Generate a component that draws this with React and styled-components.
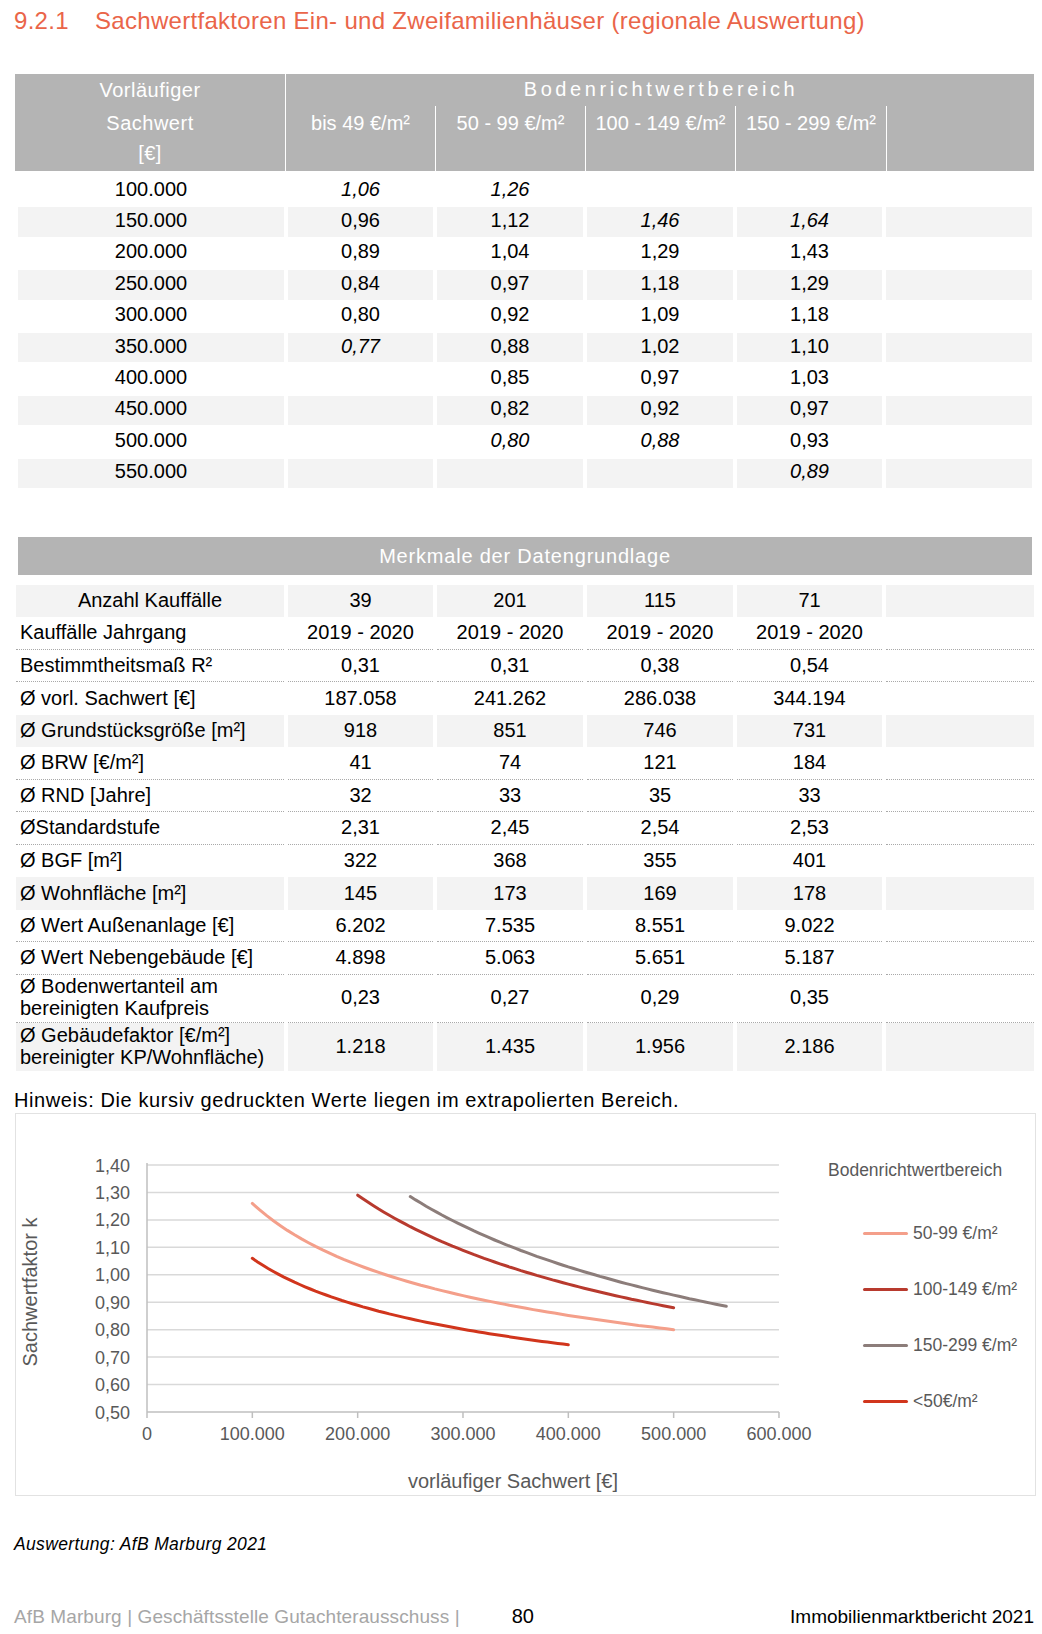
import React from "react";
import styled, { createGlobalStyle } from "styled-components";

const GlobalStyle = createGlobalStyle`
  html, body {
    margin: 0;
    padding: 0;
    background: #fff;
  }
  body {
    font-family: "Liberation Sans", Arial, sans-serif;
    color: #000;
  }
`;

const Page = styled.div`
  width: 1042px;
  box-sizing: border-box;
  padding: 0 8px 0 14px;
`;

const Title = styled.h1`
  margin: 0;
  padding-top: 6px;
  font-size: 24px;
  line-height: 30px;
  font-weight: normal;
  letter-spacing: 0.3px;
  color: #ea6549;
  white-space: nowrap;
`;

const TitleNum = styled.span`
  display: inline-block;
  width: 81px;
`;

/* ---------- Tabelle 1 ---------- */

const HeadGrid = styled.div`
  margin: 38px 0 0 1px;
  display: grid;
  grid-template-columns: 270px 150px 150px 150px 151px 150px;
  grid-template-rows: 32px 65px;
  background: #b4b4b4;
  color: #fff;
  font-size: 20px;
`;

const CornerCell = styled.div`
  grid-row: 1 / 3;
  display: grid;
  grid-template-rows: 32px 33px 28px;
  text-align: center;
  letter-spacing: 0.5px;
`;

const CornerLine = styled.span`
  line-height: ${({ $h }) => $h}px;
  padding-top: ${({ $pad }) => ($pad ? "2px" : "0")};
`;

const GroupCell = styled.div`
  grid-column: 2 / 7;
  border-left: 1px solid #fff;
  text-align: center;
  line-height: 30px;
  letter-spacing: 3.6px;
`;

const SubHead = styled.div`
  border-left: 1px solid #fff;
  padding-top: 2px;
  text-align: center;
  line-height: 31px;
  white-space: nowrap;
`;

const FactorGrid = styled.div`
  margin: 5px 0 0 4px;
  display: grid;
  grid-template-columns: 266px 145px 146px 146px 145px 146px;
  grid-auto-rows: 29.4px;
  column-gap: 4px;
  row-gap: 2px;
  font-size: 20px;
`;

const FactorCell = styled.div`
  display: flex;
  align-items: center;
  justify-content: center;
  padding-bottom: 3px;
  box-sizing: border-box;
  background: ${({ $striped }) => ($striped ? "#f3f3f3" : "transparent")};
  font-style: ${({ $italic }) => ($italic ? "italic" : "normal")};
`;

/* ---------- Tabelle 2 ---------- */

const Band = styled.div`
  margin: 49px 0 0 4px;
  width: 1014px;
  height: 38px;
  line-height: 38px;
  background: #b4b4b4;
  color: #fff;
  font-size: 20px;
  letter-spacing: 0.8px;
  text-align: center;
`;

const DataGrid = styled.div`
  margin: 10px 0 0 2px;
  display: grid;
  grid-template-columns: 268px 145px 146px 146px 145px 148px;
  column-gap: 4px;
  font-size: 20px;
`;

const DataCell = styled.div`
  height: ${({ $tall }) => ($tall ? "48px" : "32.5px")};
  box-sizing: border-box;
  display: flex;
  align-items: center;
  justify-content: ${({ $label, $center }) => ($label && !$center ? "flex-start" : "center")};
  padding: 0 0 2px ${({ $label, $center }) => ($label && !$center ? "4px" : "0")};
  background: ${({ $striped }) => ($striped ? "#f3f3f3" : "transparent")};
  border-bottom: ${({ $dotted }) => ($dotted ? "1px dotted #a9a9a9" : "none")};
  line-height: ${({ $tall }) => ($tall ? "22px" : "24px")};
  white-space: nowrap;
`;

const Note = styled.p`
  margin: 17px 0 0;
  font-size: 20px;
  line-height: 24px;
  letter-spacing: 0.6px;
`;

/* ---------- Diagramm ---------- */

const ChartBox = styled.div`
  margin: 1px 0 0 1px;
  width: 1021px;
  height: 383px;
  box-sizing: border-box;
  border: 1px solid #e2e2e2;
  display: flex;
`;

const Plot = styled.svg`
  flex: none;
  display: block;
  font-family: "Liberation Sans", Arial, sans-serif;
`;

const Legend = styled.div`
  flex: 1;
  padding: 45px 0 0 12px;
  color: #595959;
  font-size: 17.5px;
`;

const LegendTitle = styled.div`
  line-height: 22px;
  margin-bottom: 42px;
  white-space: nowrap;
`;

const LegendItem = styled.div`
  display: flex;
  align-items: center;
  height: 22px;
  margin: 0 0 34px 35px;
  white-space: nowrap;
`;

const LegendLine = styled.span`
  display: inline-block;
  width: 45px;
  height: 3px;
  border-radius: 2px;
  margin-right: 5px;
  background: ${({ $color }) => $color};
`;

/* ---------- Fuß ---------- */

const Source = styled.div`
  margin-top: 37px;
  font-size: 17.5px;
  line-height: 22px;
  font-style: italic;
  letter-spacing: 0.35px;
`;

const Footer = styled.div`
  margin-top: 49px;
  display: flex;
  align-items: baseline;
  font-size: 19px;
  line-height: 24px;
`;

const FooterLeft = styled.span`
  color: #a6a6a6;
  letter-spacing: 0.1px;
`;

const PageNo = styled.span`
  margin-left: 52px;
  font-size: 20px;
`;

const FooterRight = styled.span`
  margin-left: auto;
`;

const factorRows = [
  ["100.000", "1,06*", "1,26*", "", ""],
  ["150.000", "0,96", "1,12", "1,46*", "1,64*"],
  ["200.000", "0,89", "1,04", "1,29", "1,43"],
  ["250.000", "0,84", "0,97", "1,18", "1,29"],
  ["300.000", "0,80", "0,92", "1,09", "1,18"],
  ["350.000", "0,77*", "0,88", "1,02", "1,10"],
  ["400.000", "", "0,85", "0,97", "1,03"],
  ["450.000", "", "0,82", "0,92", "0,97"],
  ["500.000", "", "0,80*", "0,88*", "0,93"],
  ["550.000", "", "", "", "0,89*"],
];

// kind: s = grau hinterlegt, d = gepunktete Linie, n = nichts
const dataRows = [
  { label: ["Anzahl Kauffälle"], kind: "s", center: true, values: ["39", "201", "115", "71"] },
  { label: ["Kauffälle Jahrgang"], kind: "d", values: ["2019 - 2020", "2019 - 2020", "2019 - 2020", "2019 - 2020"] },
  { label: ["Bestimmtheitsmaß R²"], kind: "d", values: ["0,31", "0,31", "0,38", "0,54"] },
  { label: ["Ø vorl. Sachwert [€]"], kind: "n", values: ["187.058", "241.262", "286.038", "344.194"] },
  { label: ["Ø Grundstücksgröße [m²]"], kind: "s", values: ["918", "851", "746", "731"] },
  { label: ["Ø BRW [€/m²]"], kind: "d", values: ["41", "74", "121", "184"] },
  { label: ["Ø RND [Jahre]"], kind: "d", values: ["32", "33", "35", "33"] },
  { label: ["ØStandardstufe"], kind: "d", values: ["2,31", "2,45", "2,54", "2,53"] },
  { label: ["Ø BGF [m²]"], kind: "n", values: ["322", "368", "355", "401"] },
  { label: ["Ø Wohnfläche [m²]"], kind: "s", values: ["145", "173", "169", "178"] },
  { label: ["Ø Wert Außenanlage [€]"], kind: "d", values: ["6.202", "7.535", "8.551", "9.022"] },
  { label: ["Ø Wert Nebengebäude [€]"], kind: "d", values: ["4.898", "5.063", "5.651", "5.187"] },
  { label: ["Ø Bodenwertanteil am", "bereinigten Kaufpreis"], kind: "d", values: ["0,23", "0,27", "0,29", "0,35"] },
  { label: ["Ø Gebäudefaktor [€/m²]", "bereinigter KP/Wohnfläche)"], kind: "s", values: ["1.218", "1.435", "1.956", "2.186"] },
];

const series = [
  { name: "50-99 €/m²", color: "#f49f8a", x0: 100000, x1: 500000, k0: 1.26, k1: 0.8 },
  { name: "100-149 €/m²", color: "#b83a2e", x0: 200000, x1: 500000, k0: 1.29, k1: 0.88 },
  { name: "150-299 €/m²", color: "#8c7d7a", x0: 250000, x1: 550000, k0: 1.285, k1: 0.885 },
  { name: "<50€/m²", color: "#d1351c", x0: 100000, x1: 400000, k0: 1.06, k1: 0.745 },
];

const X0 = 131;
const PX_PER_100K = 105.33;
const Y_BOTTOM = 298;
const PX_PER_TENTH = 27.444;

const sx = (v) => X0 + (v / 100000) * PX_PER_100K;
const sy = (k) => Y_BOTTOM - ((k - 0.5) / 0.1) * PX_PER_TENTH;

const curvePath = ({ x0, x1, k0, k1 }) => {
  const b = Math.log(k1 / k0) / Math.log(x1 / x0);
  const pts = [];
  for (let i = 0; i <= 60; i++) {
    const x = x0 + ((x1 - x0) * i) / 60;
    const k = k0 * Math.pow(x / x0, b);
    pts.push(`${i ? "L" : "M"}${sx(x).toFixed(1)},${sy(k).toFixed(1)}`);
  }
  return pts.join(" ");
};

const yTicks = [1.4, 1.3, 1.2, 1.1, 1.0, 0.9, 0.8, 0.7, 0.6, 0.5];
const xTicks = [0, 100000, 200000, 300000, 400000, 500000, 600000];
const fmtK = (k) => k.toFixed(2).replace(".", ",");
const fmtX = (x) => (x === 0 ? "0" : `${x / 1000}.000`);

const Chart = () => (
  <ChartBox>
    <Plot width="800" height="381" viewBox="0 0 800 381">
      {yTicks.slice(0, -1).map((k) => (
        <line key={k} x1={X0} x2={sx(600000)} y1={sy(k)} y2={sy(k)} stroke="#d9d9d9" strokeWidth="1.5" />
      ))}
      <line x1={X0} x2={sx(600000)} y1={Y_BOTTOM} y2={Y_BOTTOM} stroke="#bfbfbf" strokeWidth="1.5" />
      <line x1={X0} x2={X0} y1={49} y2={304} stroke="#bfbfbf" strokeWidth="1.5" />
      {xTicks.slice(1).map((x) => (
        <line key={x} x1={sx(x)} x2={sx(x)} y1={Y_BOTTOM} y2={304} stroke="#bfbfbf" strokeWidth="1.5" />
      ))}
      {yTicks.map((k) => (
        <text key={k} x="114" y={sy(k) + 6.5} textAnchor="end" fontSize="18" fill="#595959">
          {fmtK(k)}
        </text>
      ))}
      {xTicks.map((x) => (
        <text key={x} x={sx(x)} y="325.5" textAnchor="middle" fontSize="18" fill="#595959">
          {fmtX(x)}
        </text>
      ))}
      {series.map((s) => (
        <path key={s.name} d={curvePath(s)} fill="none" stroke={s.color} strokeWidth="3" strokeLinecap="round" />
      ))}
      <text x="497" y="374" textAnchor="middle" fontSize="20" fill="#595959">
        vorläufiger Sachwert [€]
      </text>
      <text transform="translate(21,178) rotate(-90)" textAnchor="middle" fontSize="20" fill="#595959">
        Sachwertfaktor k
      </text>
    </Plot>
    <Legend>
      <LegendTitle>Bodenrichtwertbereich</LegendTitle>
      {series.map((s) => (
        <LegendItem key={s.name}>
          <LegendLine $color={s.color} />
          {s.name}
        </LegendItem>
      ))}
    </Legend>
  </ChartBox>
);

export default function App() {
  return (
    <Page>
      <GlobalStyle />
      <Title>
        <TitleNum>9.2.1</TitleNum>
        Sachwertfaktoren Ein- und Zweifamilienhäuser (regionale Auswertung)
      </Title>

      <HeadGrid>
        <CornerCell>
          <CornerLine $h={32}>Vorläufiger</CornerLine>
          <CornerLine $h={31} $pad>
            Sachwert
          </CornerLine>
          <CornerLine $h={28}>[€]</CornerLine>
        </CornerCell>
        <GroupCell>Bodenrichtwertbereich</GroupCell>
        <SubHead>bis 49 €/m²</SubHead>
        <SubHead>50 - 99 €/m²</SubHead>
        <SubHead>100 - 149 €/m²</SubHead>
        <SubHead>150 - 299 €/m²</SubHead>
        <SubHead />
      </HeadGrid>

      <FactorGrid>
        {factorRows.map((row, r) =>
          [...row, ""].map((v, c) => (
            <FactorCell key={`${r}-${c}`} $striped={r % 2 === 1} $italic={v.endsWith("*")}>
              {v.replace("*", "")}
            </FactorCell>
          ))
        )}
      </FactorGrid>

      <Band>Merkmale der Datengrundlage</Band>

      <DataGrid>
        {dataRows.map((row, r) => {
          const tall = row.label.length > 1;
          const props = { $tall: tall, $striped: row.kind === "s", $dotted: row.kind === "d" };
          return (
            <React.Fragment key={r}>
              <DataCell {...props} $label $center={row.center}>
                <span>
                  {row.label.map((l, i) => (
                    <React.Fragment key={i}>
                      {i > 0 && <br />}
                      {l}
                    </React.Fragment>
                  ))}
                </span>
              </DataCell>
              {[...row.values, ""].map((v, c) => (
                <DataCell key={c} {...props}>
                  {v}
                </DataCell>
              ))}
            </React.Fragment>
          );
        })}
      </DataGrid>

      <Note>Hinweis: Die kursiv gedruckten Werte liegen im extrapolierten Bereich.</Note>

      <Chart />

      <Source>Auswertung: AfB Marburg 2021</Source>

      <Footer>
        <FooterLeft>AfB Marburg | Geschäftsstelle Gutachterausschuss |</FooterLeft>
        <PageNo>80</PageNo>
        <FooterRight>Immobilienmarktbericht 2021</FooterRight>
      </Footer>
    </Page>
  );
}
